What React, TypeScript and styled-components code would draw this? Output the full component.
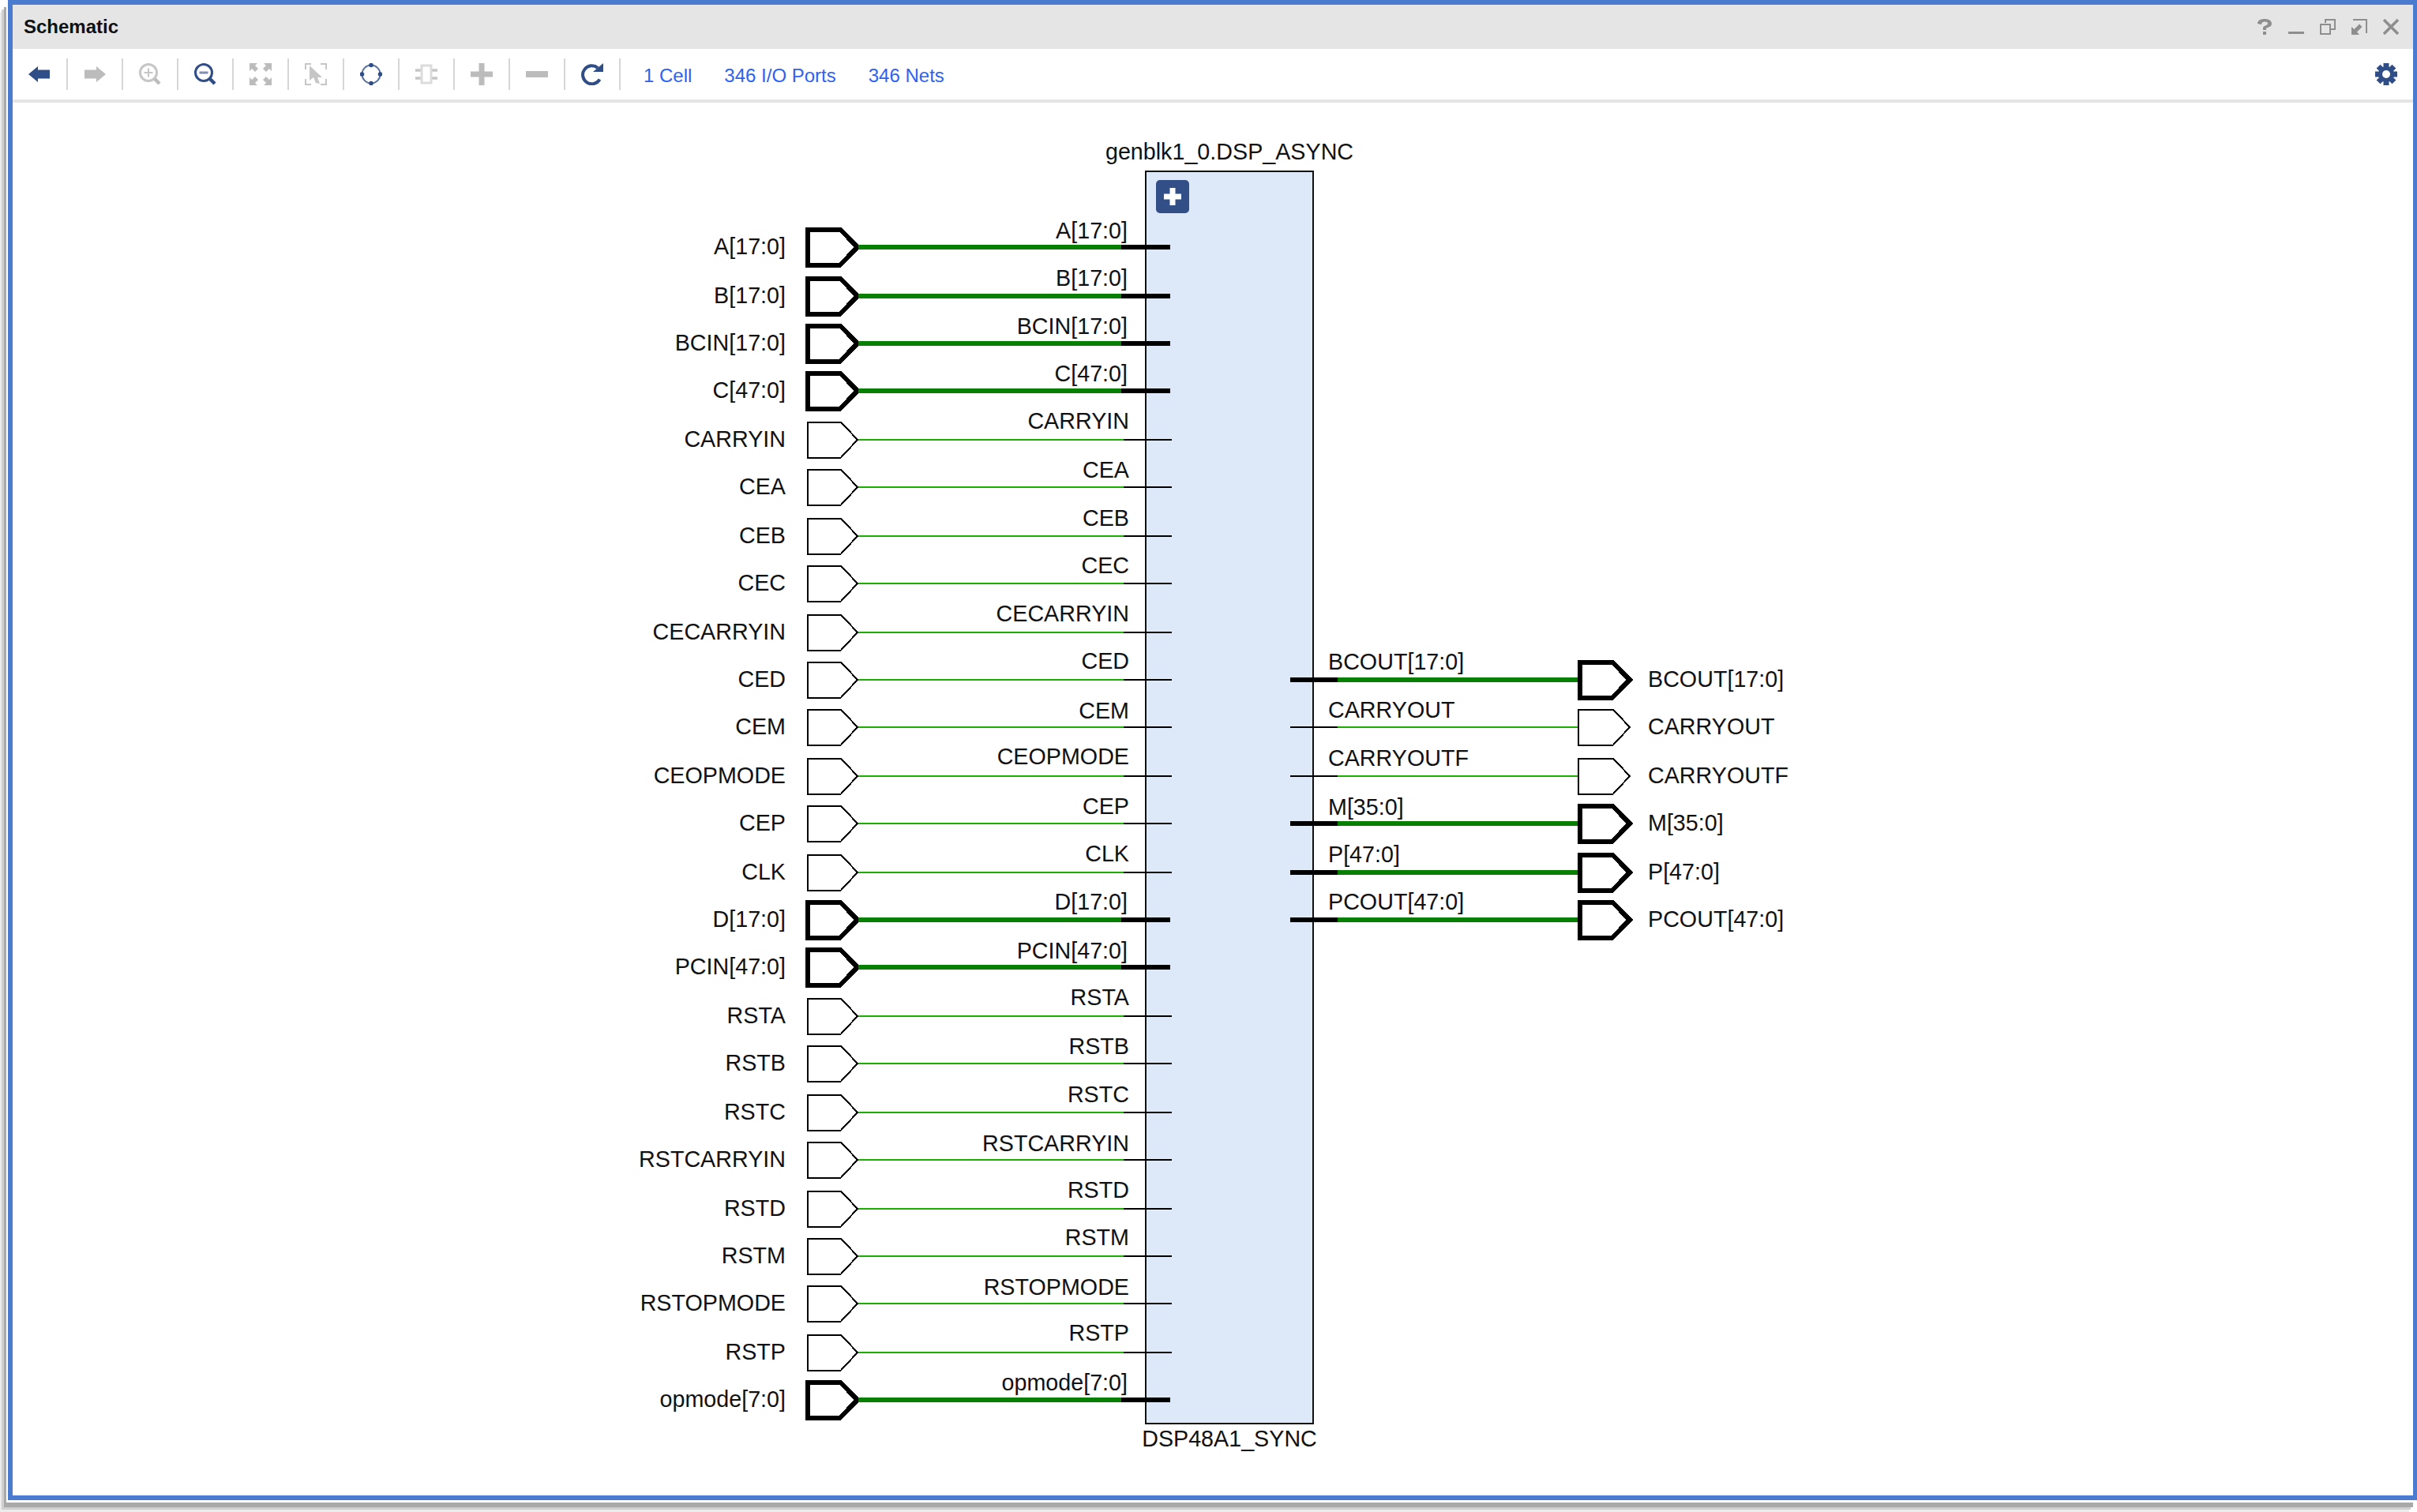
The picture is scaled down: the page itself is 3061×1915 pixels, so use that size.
import { Fragment } from 'react'
import type { ReactNode } from 'react'
import styled, { createGlobalStyle } from 'styled-components'

const BLUE = '#2f4d86'
const GRAY = '#bcbcbc'

const GlobalStyle = createGlobalStyle`
  html, body {
    margin: 0;
    padding: 0;
    background: #fff;
  }
  body {
    font-family: "Liberation Sans", Arial, sans-serif;
    color: #111;
    overflow: hidden;
  }
`

const Desktop = styled.div`
  width: 3061px;
  height: 1915px;
  box-sizing: border-box;
  padding: 0 0 15px 10px;
`

const Window = styled.div`
  height: 100%;
  box-sizing: border-box;
  display: flex;
  flex-direction: column;
  background: #fff;
  border: solid #4a7bcf;
  border-width: 6px 5px 6px 6px;
  box-shadow:
    -2px 3px 0 0 #fff,
    -5px 9px 0 0 #a9a9a9,
    -8px 12px 0 0 #cfcfcf,
    -10px 15px 0 0 #ececec;
`

const TitleBar = styled.div`
  flex: none;
  height: 56px;
  display: flex;
  align-items: center;
  gap: 20px;
  padding: 0 18px 0 14px;
  background: #e5e5e5;
`

const Title = styled.div`
  margin-right: auto;
  font-size: 24px;
  font-weight: bold;
  color: #111;
`

const Toolbar = styled.div`
  flex: none;
  height: 64px;
  display: flex;
  align-items: center;
  padding-right: 20px;
  border-bottom: 4px solid #e5e5e5;
`

const ToolButton = styled.div`
  width: 68px;
  height: 100%;
  display: flex;
  align-items: center;
  justify-content: center;
`

const Separator = styled.div`
  width: 2px;
  height: 40px;
  background: #d6d6d6;
`

const Links = styled.div`
  display: flex;
  gap: 41px;
  margin-left: 29px;
  padding-top: 3px;
`

const Link = styled.a`
  font-size: 24px;
  color: #2e62f0;
`

const Settings = styled.div`
  display: flex;
  margin-left: auto;
`

const Canvas = styled.div`
  position: relative;
  flex: 1;
  overflow: hidden;
  background: #fff;
`

const Block = styled.div`
  position: absolute;
  left: 1434px;
  top: 86px;
  width: 214px;
  height: 1588px;
  box-sizing: border-box;
  background: #dde9f8;
  border: 2px solid #111;
`

const BlockName = styled.div<{ $below?: boolean }>`
  position: absolute;
  left: 50%;
  transform: translateX(-50%);
  white-space: nowrap;
  font-size: 28.7px;
  line-height: 32px;
  ${p => (p.$below ? 'top: calc(100% + 4px);' : 'bottom: calc(100% + 10px);')}
`

const ExpandButton = styled.div`
  position: absolute;
  left: 12px;
  top: 10px;
  width: 42px;
  height: 42px;
  display: flex;
  align-items: center;
  justify-content: center;
  background: #334f87;
  border-radius: 5px;
`

const SignalRow = styled.div<{ $left: number; $y: number }>`
  position: absolute;
  left: ${p => p.$left}px;
  top: ${p => p.$y - 158}px;
  height: 56px;
  display: flex;
  align-items: center;
`

const PortLabel = styled.div<{ $side: 'left' | 'right' }>`
  font-size: 28.7px;
  line-height: 32px;
  white-space: nowrap;
  margin-top: -2px;
  ${p =>
    p.$side === 'left'
      ? 'width: 195px; margin-right: 25px; text-align: right;'
      : 'margin-left: 22px;'}
`

const Wire = styled.div<{ $bus: boolean; $width: number }>`
  flex: none;
  width: ${p => p.$width}px;
  height: ${p => (p.$bus ? 6 : 2)}px;
  background: ${p => (p.$bus ? '#067f00' : '#1aae00')};
`

const Stub = styled.div<{ $bus: boolean; $width: number }>`
  flex: none;
  width: ${p => p.$width}px;
  height: ${p => (p.$bus ? 6 : 2)}px;
  background: #000;
`

const PinLabel = styled.div<{ $side: 'left' | 'right'; $lift: number }>`
  position: absolute;
  bottom: ${p => 28 + p.$lift - 6}px;
  ${p => (p.$side === 'left' ? 'right: 54px;' : 'left: 48px;')}
  font-size: 28.7px;
  line-height: 32px;
  white-space: nowrap;
`

const PortShape = styled.svg`
  flex: none;
  overflow: visible;
`

type Pin = { name: string; y: number; lift: number; bus?: boolean }

const inputs: Pin[] = [
  { name: 'A[17:0]', y: 313, lift: 11, bus: true },
  { name: 'B[17:0]', y: 375, lift: 13, bus: true },
  { name: 'BCIN[17:0]', y: 435, lift: 12, bus: true },
  { name: 'C[47:0]', y: 495, lift: 12, bus: true },
  { name: 'CARRYIN', y: 557, lift: 14 },
  { name: 'CEA', y: 617, lift: 12 },
  { name: 'CEB', y: 679, lift: 13 },
  { name: 'CEC', y: 739, lift: 13 },
  { name: 'CECARRYIN', y: 801, lift: 14 },
  { name: 'CED', y: 861, lift: 14 },
  { name: 'CEM', y: 921, lift: 11 },
  { name: 'CEOPMODE', y: 983, lift: 15 },
  { name: 'CEP', y: 1043, lift: 12 },
  { name: 'CLK', y: 1105, lift: 14 },
  { name: 'D[17:0]', y: 1165, lift: 13, bus: true },
  { name: 'PCIN[47:0]', y: 1225, lift: 11, bus: true },
  { name: 'RSTA', y: 1287, lift: 14 },
  { name: 'RSTB', y: 1347, lift: 12 },
  { name: 'RSTC', y: 1409, lift: 13 },
  { name: 'RSTCARRYIN', y: 1469, lift: 11 },
  { name: 'RSTD', y: 1531, lift: 14 },
  { name: 'RSTM', y: 1591, lift: 14 },
  { name: 'RSTOPMODE', y: 1651, lift: 11 },
  { name: 'RSTP', y: 1713, lift: 15 },
  { name: 'opmode[7:0]', y: 1773, lift: 12, bus: true },
]

const outputs: Pin[] = [
  { name: 'BCOUT[17:0]', y: 861, lift: 13, bus: true },
  { name: 'CARRYOUT', y: 921, lift: 12 },
  { name: 'CARRYOUTF', y: 983, lift: 13 },
  { name: 'M[35:0]', y: 1043, lift: 11, bus: true },
  { name: 'P[47:0]', y: 1105, lift: 13, bus: true },
  { name: 'PCOUT[47:0]', y: 1165, lift: 13, bus: true },
]

function Port({ bus, out }: { bus?: boolean; out?: boolean }) {
  const x = out ? 1 : 3
  return (
    <PortShape width="67" height="56" viewBox="0 0 67 56" shapeRendering="crispEdges">
      {bus ? (
        <polygon points="3,5.5 44,5.5 66,28 44,50.5 3,50.5" fill="#fff" stroke="#000" strokeWidth="6" />
      ) : (
        <polygon points={`${x},5.5 45,5.5 66,28 45,50.5 ${x},50.5`} fill="#fff" stroke="#000" strokeWidth="2" />
      )}
    </PortShape>
  )
}

function Icon({ children, size = 28, box = 28 }: { children: ReactNode; size?: number; box?: number }) {
  return (
    <svg width={size} height={size} viewBox={`0 0 ${box} ${box}`}>
      {children}
    </svg>
  )
}

const toolIcons = [
  <Icon key="back">
    <path d="M0 14 L12 4 V8.5 H27 V19.5 H12 V24 Z" fill={BLUE} />
  </Icon>,
  <Icon key="forward">
    <path d="M28 14 L16 4 V8.5 H1 V19.5 H16 V24 Z" fill={GRAY} />
  </Icon>,
  <Icon key="zoom-in">
    <circle cx="12" cy="12" r="10.5" fill="none" stroke="#c6c6c6" strokeWidth="3" />
    <path d="M12 6.5 V17.5 M6.5 12 H17.5" stroke="#c6c6c6" strokeWidth="2" />
    <path d="M20 20 L26 26" stroke="#bcbcbc" strokeWidth="4.5" />
  </Icon>,
  <Icon key="zoom-out">
    <circle cx="12" cy="12" r="10.5" fill="none" stroke={BLUE} strokeWidth="3" />
    <path d="M6.5 12 H17.5" stroke="#7d8fb3" strokeWidth="3" />
    <path d="M20 20 L26 26" stroke={BLUE} strokeWidth="4.5" />
  </Icon>,
  <Icon key="fit">
    {[0, 90, 180, 270].map(r => (
      <path
        key={r}
        d="M0 0 H10 L7 3 L11 7 L7 11 L3 7 L0 10 Z"
        fill={GRAY}
        transform={`rotate(${r} 14 14)`}
      />
    ))}
  </Icon>,
  <Icon key="fit-selection">
    <path
      d="M8 1 H1 V8 M20 1 H27 V8 M1 20 V27 H8 M27 20 V27 H20"
      fill="none"
      stroke="#c6c6c6"
      strokeWidth="2"
    />
    <path d="M6 3 L22 18 H16 L19 26 L14 25 L11 18 L6 22 Z" fill="#c6c6c6" />
  </Icon>,
  <Icon key="regenerate">
    <circle cx="14" cy="14" r="11.5" fill="none" stroke="#5670a0" strokeWidth="2" />
    <circle cx="14" cy="2.5" r="2.8" fill={BLUE} />
    <circle cx="14" cy="25.5" r="2.8" fill={BLUE} />
    <circle cx="2.5" cy="14" r="2.8" fill={BLUE} />
    <circle cx="25.5" cy="14" r="2.8" fill={BLUE} />
  </Icon>,
  <Icon key="cell">
    <path d="M0 9 H7 M21 9 H28 M0 19 H7 M21 19 H28" stroke="#c6c6c6" strokeWidth="3.5" />
    <rect x="8" y="3" width="12" height="22" fill="#fff" stroke="#dcdcdc" strokeWidth="3" />
  </Icon>,
  <Icon key="add">
    <path d="M14 0 V28 M0 14 H28" stroke={GRAY} strokeWidth="7" />
  </Icon>,
  <Icon key="remove">
    <path d="M0 14 H28" stroke={GRAY} strokeWidth="8" />
  </Icon>,
  <Icon key="reload">
    <path d="M23.5 20.5 A11.5 11.5 0 1 1 21 6" fill="none" stroke={BLUE} strokeWidth="4" />
    <path d="M15 11 H28 V0 Z" fill={BLUE} />
  </Icon>,
]

function Gear() {
  return (
    <Icon>
      {[0, 45, 90, 135].map(r => (
        <rect key={r} x="10.5" y="0" width="7" height="28" fill={BLUE} transform={`rotate(${r} 14 14)`} />
      ))}
      <circle cx="14" cy="14" r="10" fill={BLUE} />
      <circle cx="14" cy="14" r="5" fill="#fff" />
    </Icon>
  )
}

function WindowControls() {
  const c = '#8e8e8e'
  return (
    <>
      <Icon size={20} box={20}>
        <path
          d="M1 6 C1 2 5 0 10 0 C15 0 19 2 19 6 C19 10 15 10 12 12 V14 H8 V11 C8 9 14 8 14 6 C14 4 12 3.5 10 3.5 C8 3.5 6 4.5 6 7 Z M8 16 H12 V20 H8 Z"
          fill={c}
        />
      </Icon>
      <Icon size={20} box={20}>
        <path d="M0 17.5 H20" stroke={c} strokeWidth="3" />
      </Icon>
      <Icon size={20} box={20}>
        <path d="M7 5 V1 H19 V13 H13" fill="none" stroke={c} strokeWidth="2" />
        <rect x="1" y="7" width="12" height="12" fill="none" stroke={c} strokeWidth="2" />
      </Icon>
      <Icon size={20} box={20}>
        <path d="M2 1 H19 V18" fill="none" stroke={c} strokeWidth="2" />
        <path d="M0 20 V10 L3.5 13 L10 6.5 L13.5 10 L7 16.5 L10 20 Z" fill={c} />
      </Icon>
      <Icon size={20} box={20}>
        <path d="M1 1 L19 19 M19 1 L1 19" stroke={c} strokeWidth="3.5" />
      </Icon>
    </>
  )
}

function App() {
  return (
    <Desktop>
      <GlobalStyle />
      <Window>
        <TitleBar>
          <Title>Schematic</Title>
          <WindowControls />
        </TitleBar>
        <Toolbar>
          {toolIcons.map(icon => (
            <Fragment key={icon.key}>
              <ToolButton>{icon}</ToolButton>
              <Separator />
            </Fragment>
          ))}
          <Links>
            <Link>1 Cell</Link>
            <Link>346 I/O Ports</Link>
            <Link>346 Nets</Link>
          </Links>
          <Settings>
            <Gear />
          </Settings>
        </Toolbar>
        <Canvas>
          <Block>
            <BlockName>genblk1_0.DSP_ASYNC</BlockName>
            <ExpandButton>
              <Icon size={24} box={24}>
                <path d="M12 1 V23 M1 12 H23" stroke="#fff" strokeWidth="7" />
              </Icon>
            </ExpandButton>
            <BlockName $below>DSP48A1_SYNC</BlockName>
          </Block>
          {inputs.map(pin => (
            <SignalRow key={pin.name} $left={784} $y={pin.y}>
              <PortLabel $side="left">{pin.name}</PortLabel>
              <Port bus={pin.bus} />
              <Wire $bus={!!pin.bus} $width={pin.bus ? 333 : 336} />
              <Stub $bus={!!pin.bus} $width={pin.bus ? 62 : 61} />
              <PinLabel $side="left" $lift={pin.lift}>{pin.name}</PinLabel>
            </SignalRow>
          ))}
          {outputs.map(pin => (
            <SignalRow key={pin.name} $left={1618} $y={pin.y}>
              <Stub $bus={!!pin.bus} $width={60} />
              <Wire $bus={!!pin.bus} $width={304} />
              <Port bus={pin.bus} out />
              <PortLabel $side="right">{pin.name}</PortLabel>
              <PinLabel $side="right" $lift={pin.lift}>{pin.name}</PinLabel>
            </SignalRow>
          ))}
        </Canvas>
      </Window>
    </Desktop>
  )
}

export default App
